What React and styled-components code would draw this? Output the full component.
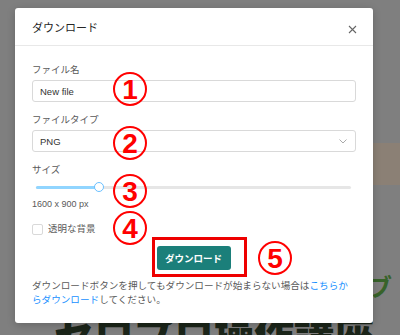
import React from 'react'
import styled, { createGlobalStyle } from 'styled-components'

const GlobalStyle = createGlobalStyle`
  html, body {
    margin: 0;
    padding: 0;
    background: #7f7f7f;
  }
  body {
    font-family: "Liberation Sans", "Noto Sans CJK JP", sans-serif;
  }
  * { box-sizing: border-box; }
`

const Page = styled.div`
  position: relative;
  width: 400px;
  height: 335px;
  overflow: hidden;
  background: #7f7f7f;
`

const BackPage = styled.div`
  display: flex;
  flex-direction: column;
  align-items: flex-end;
  padding-top: 143px;
`

const Band = styled.div`
  width: 30px;
  height: 42px;
  background: #8b8075;
`

const GreenText = styled.div`
  margin-top: 88px;
  margin-right: 8px;
  font-family: "Noto Sans CJK JP", sans-serif;
  font-weight: 700;
  font-size: 24px;
  line-height: 26px;
  color: #38632a;
`

const BigHeading = styled.div`
  align-self: flex-start;
  margin-top: 14px;
  margin-left: 54px;
  font-family: "Noto Sans CJK JP", sans-serif;
  font-weight: 900;
  font-size: 40px;
  line-height: 40px;
  color: #1b2519;
  white-space: nowrap;
`

const Modal = styled.div`
  position: absolute;
  left: 15px;
  top: 8px;
  width: 358px;
  height: 315px;
  background: #fff;
  border-radius: 3px;
  box-shadow: 0 2px 8px rgba(0, 0, 0, 0.2);
  display: flex;
  flex-direction: column;
`

const Header = styled.div`
  height: 38px;
  padding: 0 17px;
  display: flex;
  align-items: center;
  justify-content: space-between;
  border-bottom: 1px solid #e8e8e8;
`

const Title = styled.div`
  font-size: 11px;
  color: #262626;
  padding-top: 1px;
`

const Close = styled.div`
  display: flex;
  margin-top: 6px;
  margin-right: -1px;
`

const Body = styled.div`
  padding: 17px 17px 0;
  display: flex;
  flex-direction: column;
`

const Label = styled.div`
  font-size: 9.5px;
  line-height: 14px;
  color: #595959;
  margin-top: ${(p) => p.$top || 0}px;
`

const Input = styled.div`
  margin-top: 3px;
  height: 22px;
  border: 1px solid #d9d9d9;
  border-radius: 3px;
  display: flex;
  align-items: center;
  justify-content: space-between;
  padding: 0 8px 0 7px;
  font-size: 9.5px;
  color: #333;
`

const SliderWrap = styled.div`
  position: relative;
  height: 14px;
  margin: 3px 5px 0 4px;
  display: flex;
  align-items: center;
`

const Track = styled.div`
  width: 100%;
  height: 3px;
  border-radius: 2px;
  background: #e6e6e6;
`

const Fill = styled.div`
  height: 3px;
  border-radius: 2px;
  background: #91d5ff;
`

const Thumb = styled.div`
  position: absolute;
  top: 50%;
  width: 10px;
  height: 10px;
  margin: -5px 0 0 -5px;
  border-radius: 50%;
  background: #fff;
  border: 1.5px solid #69c0ff;
`

const SizeText = styled.div`
  margin-top: 3px;
  font-size: 9px;
  line-height: 14px;
  color: #595959;
`

const CheckRow = styled.div`
  margin-top: 11px;
  display: flex;
  align-items: center;
  gap: 5px;
  font-size: 9.5px;
  line-height: 14px;
  color: #595959;
`

const Box = styled.div`
  width: 11px;
  height: 11px;
  border: 1px solid #d9d9d9;
  border-radius: 2px;
`

const ButtonRow = styled.div`
  margin-top: 10px;
  display: flex;
  justify-content: center;
`

const Button = styled.div`
  width: 74px;
  height: 24px;
  border-radius: 3px;
  background: #1b7f7a;
  color: #fff;
  font-weight: 700;
  font-size: 9.5px;
  display: flex;
  align-items: center;
  justify-content: center;
  margin-left: -1px;
`

const Note = styled.p`
  margin: 9px 0 0;
  font-size: 9.6px;
  line-height: 14px;
  color: #595959;
`

const Link = styled.span`
  color: #1890ff;
`

const Marker = styled.div`
  position: absolute;
  left: ${(p) => p.$x - 17}px;
  top: ${(p) => p.$y - 17}px;
  width: 34px;
  height: 34px;
  border: 2px solid #ff0000;
  border-radius: 50%;
  display: flex;
  align-items: center;
  justify-content: center;
  font-family: "Liberation Sans", sans-serif;
  font-weight: 700;
  font-size: 28px;
  color: #ff0000;
  line-height: 1;
  padding-top: 1px;
`

const Highlight = styled.div`
  position: absolute;
  left: 152px;
  top: 237px;
  width: 95px;
  height: 40px;
  border: 3px solid #ee0000;
`

const markers = [
  { n: 1, x: 130, y: 89 },
  { n: 2, x: 130, y: 143 },
  { n: 3, x: 130, y: 191 },
  { n: 4, x: 130, y: 228 },
  { n: 5, x: 275, y: 258 },
]

const App = () => {
  const value = 20

  return (
    <Page>
      <GlobalStyle />
      <BackPage>
        <Band />
        <GreenText>ブ</GreenText>
        <BigHeading>セロプロ操作講座</BigHeading>
      </BackPage>

      <Modal>
        <Header>
          <Title>ダウンロード</Title>
          <Close>
            <svg width="9" height="9" viewBox="0 0 9 9">
              <path d="M1 1L8 8M8 1L1 8" stroke="#666" strokeWidth="1.1" fill="none" />
            </svg>
          </Close>
        </Header>
        <Body>
          <Label>ファイル名</Label>
          <Input>New file</Input>

          <Label $top={11}>ファイルタイプ</Label>
          <Input>
            <span>PNG</span>
            <svg width="8" height="5" viewBox="0 0 8 5">
              <path d="M0.5 0.5L4 4L7.5 0.5" stroke="#aaa" strokeWidth="1" fill="none" />
            </svg>
          </Input>

          <Label $top={11}>サイズ</Label>
          <SliderWrap>
            <Track>
              <Fill style={{ width: `${value}%` }} />
            </Track>
            <Thumb style={{ left: `${value}%` }} />
          </SliderWrap>
          <SizeText>1600 x 900 px</SizeText>

          <CheckRow>
            <Box />
            <span>透明な背景</span>
          </CheckRow>

          <ButtonRow>
            <Button>ダウンロード</Button>
          </ButtonRow>

          <Note>
            ダウンロードボタンを押してもダウンロードが始まらない場合は
            <Link>こちらか</Link>
            <Link>らダウンロード</Link>
            してください。
          </Note>
        </Body>
      </Modal>

      <Highlight />
      {markers.map((m) => (
        <Marker key={m.n} $x={m.x} $y={m.y}>
          {m.n}
        </Marker>
      ))}
    </Page>
  )
}

export default App
